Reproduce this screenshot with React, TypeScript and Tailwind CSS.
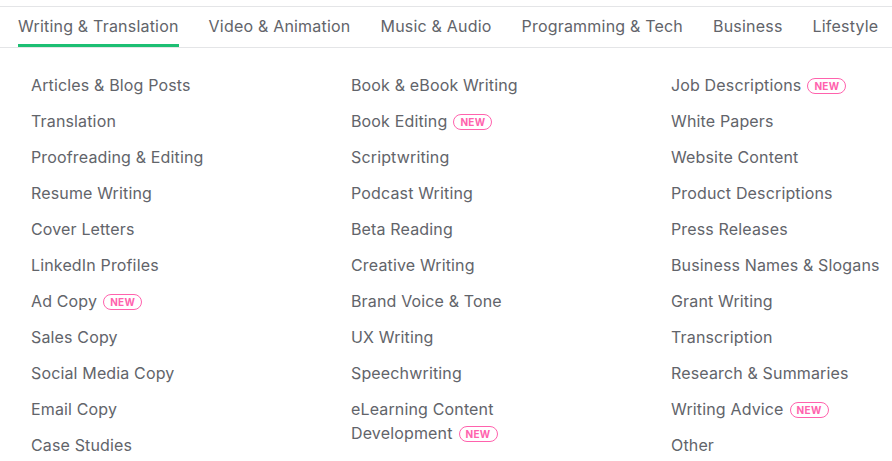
import React from "react";

const tabs = [
  "Writing & Translation",
  "Video & Animation",
  "Music & Audio",
  "Programming & Tech",
  "Business",
  "Lifestyle",
];

type Item = { label: string; isNew?: boolean };

const columns: Item[][] = [
  [
    { label: "Articles & Blog Posts" },
    { label: "Translation" },
    { label: "Proofreading & Editing" },
    { label: "Resume Writing" },
    { label: "Cover Letters" },
    { label: "LinkedIn Profiles" },
    { label: "Ad Copy", isNew: true },
    { label: "Sales Copy" },
    { label: "Social Media Copy" },
    { label: "Email Copy" },
    { label: "Case Studies" },
  ],
  [
    { label: "Book & eBook Writing" },
    { label: "Book Editing", isNew: true },
    { label: "Scriptwriting" },
    { label: "Podcast Writing" },
    { label: "Beta Reading" },
    { label: "Creative Writing" },
    { label: "Brand Voice & Tone" },
    { label: "UX Writing" },
    { label: "Speechwriting" },
    { label: "eLearning Content Development", isNew: true },
  ],
  [
    { label: "Job Descriptions", isNew: true },
    { label: "White Papers" },
    { label: "Website Content" },
    { label: "Product Descriptions" },
    { label: "Press Releases" },
    { label: "Business Names & Slogans" },
    { label: "Grant Writing" },
    { label: "Transcription" },
    { label: "Research & Summaries" },
    { label: "Writing Advice", isNew: true },
    { label: "Other" },
  ],
];

function NewBadge() {
  return (
    <span className="ml-[6px] inline-flex h-[16px] items-center rounded-full border border-[#ff62ad] px-[6px] align-[1px] text-[10px] font-bold leading-none tracking-[0.3px] text-[#ff62ad]">
      NEW
    </span>
  );
}

export default function App() {
  return (
    <div className="h-[461px] w-[892px] overflow-hidden bg-white font-['Inter',sans-serif] text-[#62646a]">
      <div className="mt-[6px] border-y border-[#e4e5e7]">
        <nav className="flex gap-[30px] pl-[18px] whitespace-nowrap">
          {tabs.map((tab, i) => (
            <div
              key={tab}
              className={`flex h-[40px] items-center border-b-[3px] pt-[1px] text-[16px] tracking-[0.2px] ${
                i === 0 ? "border-[#1dbf73]" : "border-transparent"
              }`}
            >
              {tab}
            </div>
          ))}
        </nav>
      </div>

      <div className="grid grid-cols-[320px_320px_1fr] pt-[25px] pl-[31px]">
        {columns.map((col, c) => (
          <ul key={c} className="flex flex-col gap-[12px]">
            {col.map((item) => (
              <li key={item.label} className="max-w-[220px] text-[16px] leading-[24px] tracking-[0.15px]">
                {item.label}
                {item.isNew && <NewBadge />}
              </li>
            ))}
          </ul>
        ))}
      </div>
    </div>
  );
}
